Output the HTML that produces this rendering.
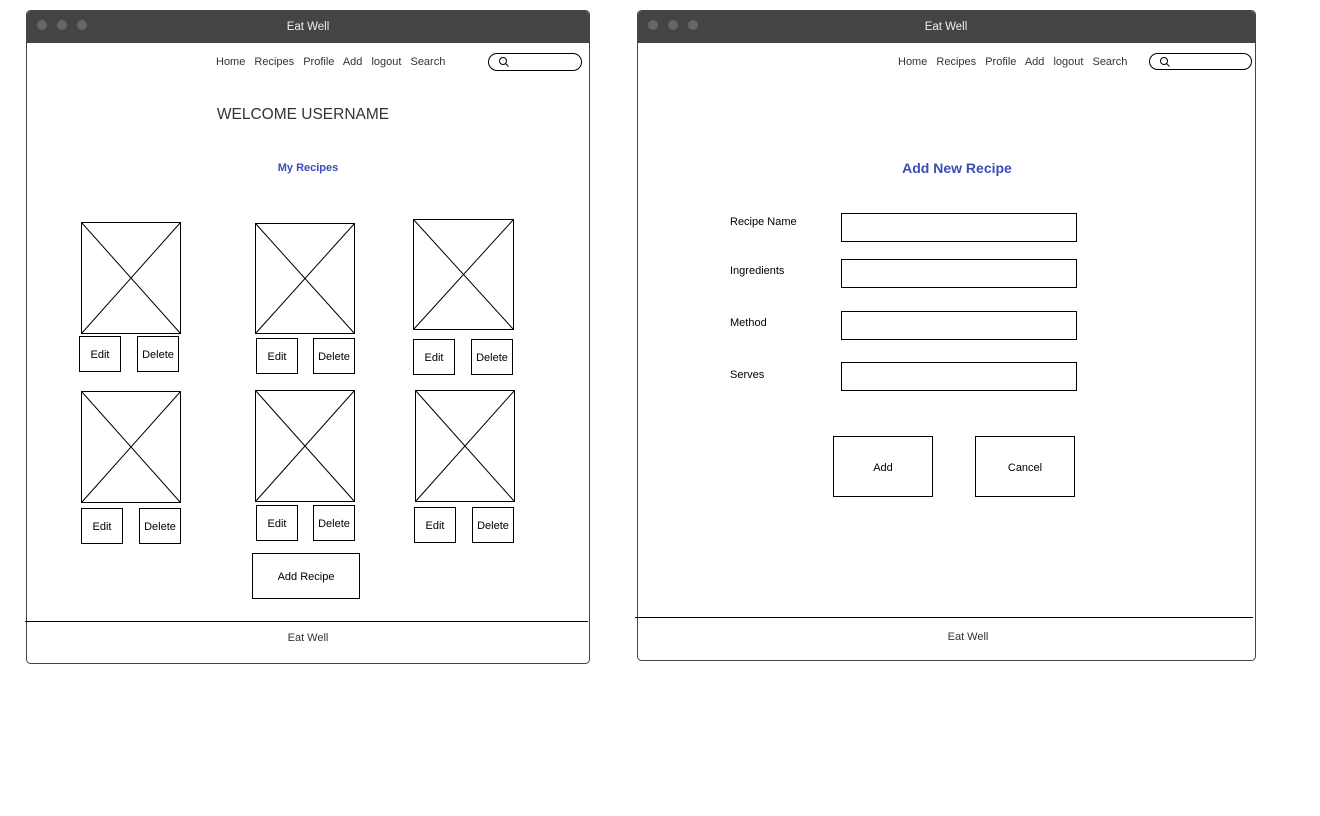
<!DOCTYPE html>
<html><head><style>body{margin:0;background:#fff}svg{display:block}text{font-family:"Liberation Sans",sans-serif;fill:#333}</style></head><body>
<svg width="1320" height="816" xmlns="http://www.w3.org/2000/svg">
<g fill="none" stroke="#444">
<rect x="26.5" y="10.5" width="563" height="653" rx="4"/>
<rect x="637.5" y="10.5" width="618" height="650" rx="4"/>
</g>
<path d="M27 43V15a4 4 0 0 1 4-4h554a4 4 0 0 1 4 4v28z" fill="#444"/>
<path d="M638 43V15a4 4 0 0 1 4-4h609a4 4 0 0 1 4 4v28z" fill="#444"/>
<g fill="#666"><circle cx="42" cy="25" r="5"/><circle cx="62" cy="25" r="5"/><circle cx="82" cy="25" r="5"/><circle cx="653" cy="25" r="5"/><circle cx="673" cy="25" r="5"/><circle cx="693" cy="25" r="5"/></g>
<text x="308" y="30" font-size="11.5" text-anchor="middle" style="fill:#eee">Eat Well</text>
<text x="946" y="30" font-size="11.5" text-anchor="middle" style="fill:#eee">Eat Well</text>
<text x="216" y="65" font-size="11" word-spacing="6">Home Recipes Profile Add logout Search</text>
<text x="898" y="65" font-size="11" word-spacing="6">Home Recipes Profile Add logout Search</text>
<g fill="none" stroke="#000">
<rect x="488.5" y="53.5" width="93" height="17" rx="8.5"/>
<rect x="1149.5" y="53.5" width="102" height="16" rx="8"/>
<circle cx="503" cy="61" r="3.5"/><path d="M505.5 63.5l3 3"/>
<circle cx="1164" cy="61" r="3.5"/><path d="M1166.5 63.5l3 3"/>
</g>
<text x="303" y="119" font-size="15.5" text-anchor="middle">WELCOME USERNAME</text>
<text x="308" y="171" font-size="11" font-weight="bold" text-anchor="middle" style="fill:#3b4db5">My Recipes</text>
<text x="957" y="173" font-size="14" font-weight="bold" text-anchor="middle" style="fill:#3b4db5">Add New Recipe</text>
<g fill="none" stroke="#000" stroke-width="1">
<rect x="81.5" y="222.5" width="99" height="111"/><path d="M81.5 222.5L180.5 333.5M180.5 222.5L81.5 333.5"/>
<rect x="255.5" y="223.5" width="99" height="110"/><path d="M255.5 223.5L354.5 333.5M354.5 223.5L255.5 333.5"/>
<rect x="413.5" y="219.5" width="100" height="110"/><path d="M413.5 219.5L513.5 329.5M513.5 219.5L413.5 329.5"/>
<rect x="81.5" y="391.5" width="99" height="111"/><path d="M81.5 391.5L180.5 502.5M180.5 391.5L81.5 502.5"/>
<rect x="255.5" y="390.5" width="99" height="111"/><path d="M255.5 390.5L354.5 501.5M354.5 390.5L255.5 501.5"/>
<rect x="415.5" y="390.5" width="99" height="111"/><path d="M415.5 390.5L514.5 501.5M514.5 390.5L415.5 501.5"/>
<rect x="79.5" y="336.5" width="41" height="35"/><rect x="137.5" y="336.5" width="41" height="35"/>
<rect x="256.5" y="338.5" width="41" height="35"/><rect x="313.5" y="338.5" width="41" height="35"/>
<rect x="413.5" y="339.5" width="41" height="35"/><rect x="471.5" y="339.5" width="41" height="35"/>
<rect x="81.5" y="508.5" width="41" height="35"/><rect x="139.5" y="508.5" width="41" height="35"/>
<rect x="256.5" y="505.5" width="41" height="35"/><rect x="313.5" y="505.5" width="41" height="35"/>
<rect x="414.5" y="507.5" width="41" height="35"/><rect x="472.5" y="507.5" width="41" height="35"/>
<rect x="252.5" y="553.5" width="107" height="45"/>
<rect x="841.5" y="213.5" width="235" height="28"/><rect x="841.5" y="259.5" width="235" height="28"/>
<rect x="841.5" y="311.5" width="235" height="28"/><rect x="841.5" y="362.5" width="235" height="28"/>
<rect x="833.5" y="436.5" width="99" height="60"/><rect x="975.5" y="436.5" width="99" height="60"/>
<path d="M25 621.5H588M635 617.5H1253"/>
</g>
<g font-size="11" text-anchor="middle" style="fill:#000">
<text x="100" y="358" style="fill:#000">Edit</text><text x="158" y="358" style="fill:#000">Delete</text>
<text x="277" y="360" style="fill:#000">Edit</text><text x="334" y="360" style="fill:#000">Delete</text>
<text x="434" y="361" style="fill:#000">Edit</text><text x="492" y="361" style="fill:#000">Delete</text>
<text x="102" y="530" style="fill:#000">Edit</text><text x="160" y="530" style="fill:#000">Delete</text>
<text x="277" y="527" style="fill:#000">Edit</text><text x="334" y="527" style="fill:#000">Delete</text>
<text x="435" y="529" style="fill:#000">Edit</text><text x="493" y="529" style="fill:#000">Delete</text>
<text x="306" y="580" style="fill:#000">Add Recipe</text>
<text x="883" y="471" style="fill:#000">Add</text><text x="1025" y="471" style="fill:#000">Cancel</text>
</g>
<g font-size="11" style="fill:#000">
<text x="730" y="225" style="fill:#000">Recipe Name</text>
<text x="730" y="274" style="fill:#000">Ingredients</text>
<text x="730" y="326" style="fill:#000">Method</text>
<text x="730" y="378" style="fill:#000">Serves</text>
</g>
<text x="308" y="641" font-size="11" text-anchor="middle">Eat Well</text>
<text x="968" y="640" font-size="11" text-anchor="middle">Eat Well</text>
</svg>
</body></html>
